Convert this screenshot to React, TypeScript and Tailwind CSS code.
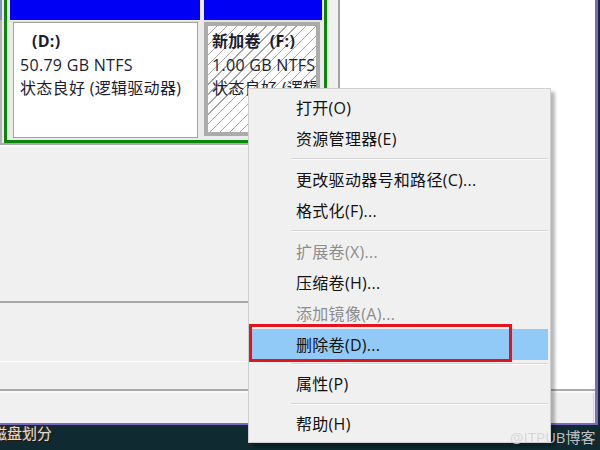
import React from "react";

const font = "font-['Segoe_UI','Open_Sans','Noto_Sans_CJK_SC',sans-serif]";

function Item({ label, disabled, active }: { label: string; disabled?: boolean; active?: boolean }) {
  return (
    <div
      className={`h-[31px] flex items-center pl-[45px] text-[16px] tracking-[0.3px] whitespace-nowrap ${
        active ? "bg-[#91c9f7]" : ""
      } ${disabled ? "text-[#8d8d8d]" : "text-[#111]"}`}
    >
      {label}
    </div>
  );
}

function Sep({ h = "h-[10px]" }: { h?: string }) {
  return (
    <div className={`${h} flex flex-col justify-center pl-[40px]`}>
      <div className="h-px bg-[#d5d5d5]" />
      <div className="h-px bg-[#fbfbfb]" />
    </div>
  );
}

export default function App() {
  return (
    <div className={`w-[600px] h-[450px] relative overflow-hidden bg-[#0f2a31] ${font}`}>
      {/* window */}
      <div className="w-[598px] h-[425px] flex flex-col border-r-[3px] border-b-[2px] border-[#7a68c0] bg-[#f0f0f0]">
        <div className="h-[389px] flex">
          {/* left graphic pane */}
          <div className="w-[340px] flex flex-col border-r-[2px] border-[#a3a3a3] bg-[#f0f0f0]">
            <div className="h-[143px] flex">
              <div className="w-[2px] flex flex-col">
                <div className="h-[20px] bg-[#8090c0]" />
                <div className="flex-1 bg-[#b4b4b4]" />
              </div>
              <div className="w-[2px] bg-[#ececec]" />
              <div className="w-[323px] border-x-[3px] border-b-[3px] border-[#0a870a] bg-[#ebebeb] flex pl-[3px] pr-[2px]">
                {/* D column */}
                <div className="w-[190px] flex flex-col">
                  <div className="h-[20px] bg-[#0000f5]" />
                  <div className="h-[1px] bg-[#f4f4f4]" />
                  <div className="h-[1px] bg-[#dcdcdc]" />
                  <div className="ml-[3px] mr-[2px] h-[116px] border border-[#a4a4a4] bg-white pl-[6px] pt-[7px] text-[#1c1c30] leading-[23.5px] text-[16px] tracking-[0.3px]">
                    <div className="font-bold ml-[12px]">(D:)</div>
                    <div className="whitespace-nowrap">50.79 GB NTFS</div>
                    <div className="whitespace-nowrap">状态良好 (逻辑驱动器)</div>
                  </div>
                </div>
                <div className="w-[4px]" />
                {/* F column */}
                <div className="w-[118px] flex flex-col">
                  <div className="h-[20px] bg-[#0000f5]" />
                  <div className="h-[2px] bg-[#e4e4e4]" />
                  <div className="mr-[2px] h-[114px] border-[4px] border-[#ababab] bg-[repeating-linear-gradient(135deg,#ffffff_0px,#ffffff_6px,#a6a6a6_6px,#a6a6a6_7px)] pl-[4px] pt-[4px] overflow-hidden text-[#1c1c30] leading-[23.5px] text-[16px] tracking-[0.3px]">
                    <div className="font-bold whitespace-pre">新加卷  (F:)</div>
                    <div className="whitespace-nowrap">1.00 GB NTFS</div>
                    <div className="whitespace-nowrap">状态良好 (逻辑驱动器)</div>
                  </div>
                </div>
              </div>
              <div className="flex-1 bg-[#f0f0f0]" />
            </div>
            <div className="h-[2px] bg-[#a9a9a9]" />
            <div className="h-[2px] bg-[#fafafa]" />
            <div className="h-[154px] bg-[#f0f0f0]" />
            <div className="h-[2px] bg-[#a9a9a9]" />
            <div className="h-[58px] bg-[#f0f0f0]" />
            <div className="h-px bg-[#fbfbfb]" />
            <div className="flex-1 bg-[#f0f0f0]" />
          </div>
          {/* right white */}
          <div className="flex-1 bg-white" />
        </div>
        {/* status bar */}
        <div className="h-[2px] bg-[#a9a9a9]" />
        <div className="h-[2px] bg-[#fafafa]" />
        <div className="flex-1 flex bg-[#f0f0f0]">
          <div className="flex-1" />
          <div className="w-px bg-[#d2d2d2]" />
          <div className="w-[1px]" />
        </div>
      </div>
      {/* desktop strip */}
      <div className="h-[25px] relative">
        <div className="absolute left-[-8px] top-[-3px] text-[15px] text-[#dcdcdc] [text-shadow:0_0_2px_#b0601c,1px_1px_1px_#000] whitespace-nowrap">
          磁盘划分
        </div>
      </div>

      {/* context menu */}
      <div className="absolute left-[248px] top-[88px] w-[303px] border border-[#cfcfcf] bg-[#f0f0f0] py-[3px] px-[2px] shadow-[4px_4px_3px_rgba(0,0,0,0.28)]">
        <Item label="打开(O)" />
        <Item label="资源管理器(E)" />
        <Sep />
        <Item label="更改驱动器号和路径(C)..." />
        <Item label="格式化(F)..." />
        <Sep />
        <Item label="扩展卷(X)..." disabled />
        <Item label="压缩卷(H)..." />
        <Item label="添加镜像(A)..." disabled />
        <Item label="删除卷(D)..." active />
        <Sep h="h-[8px]" />
        <Item label="属性(P)" />
        <Sep h="h-[9px]" />
        <Item label="帮助(H)" />
      </div>

      {/* red annotation box */}
      <div className="absolute left-[249px] top-[324px] w-[263px] h-[38px] border-[3px] border-[#e3141d]" />

      {/* watermark */}
      <div className="absolute left-[510px] top-[426px] text-[15px] text-[#d4d4d4]/90 whitespace-nowrap">
        @ITPUB博客
      </div>
    </div>
  );
}
